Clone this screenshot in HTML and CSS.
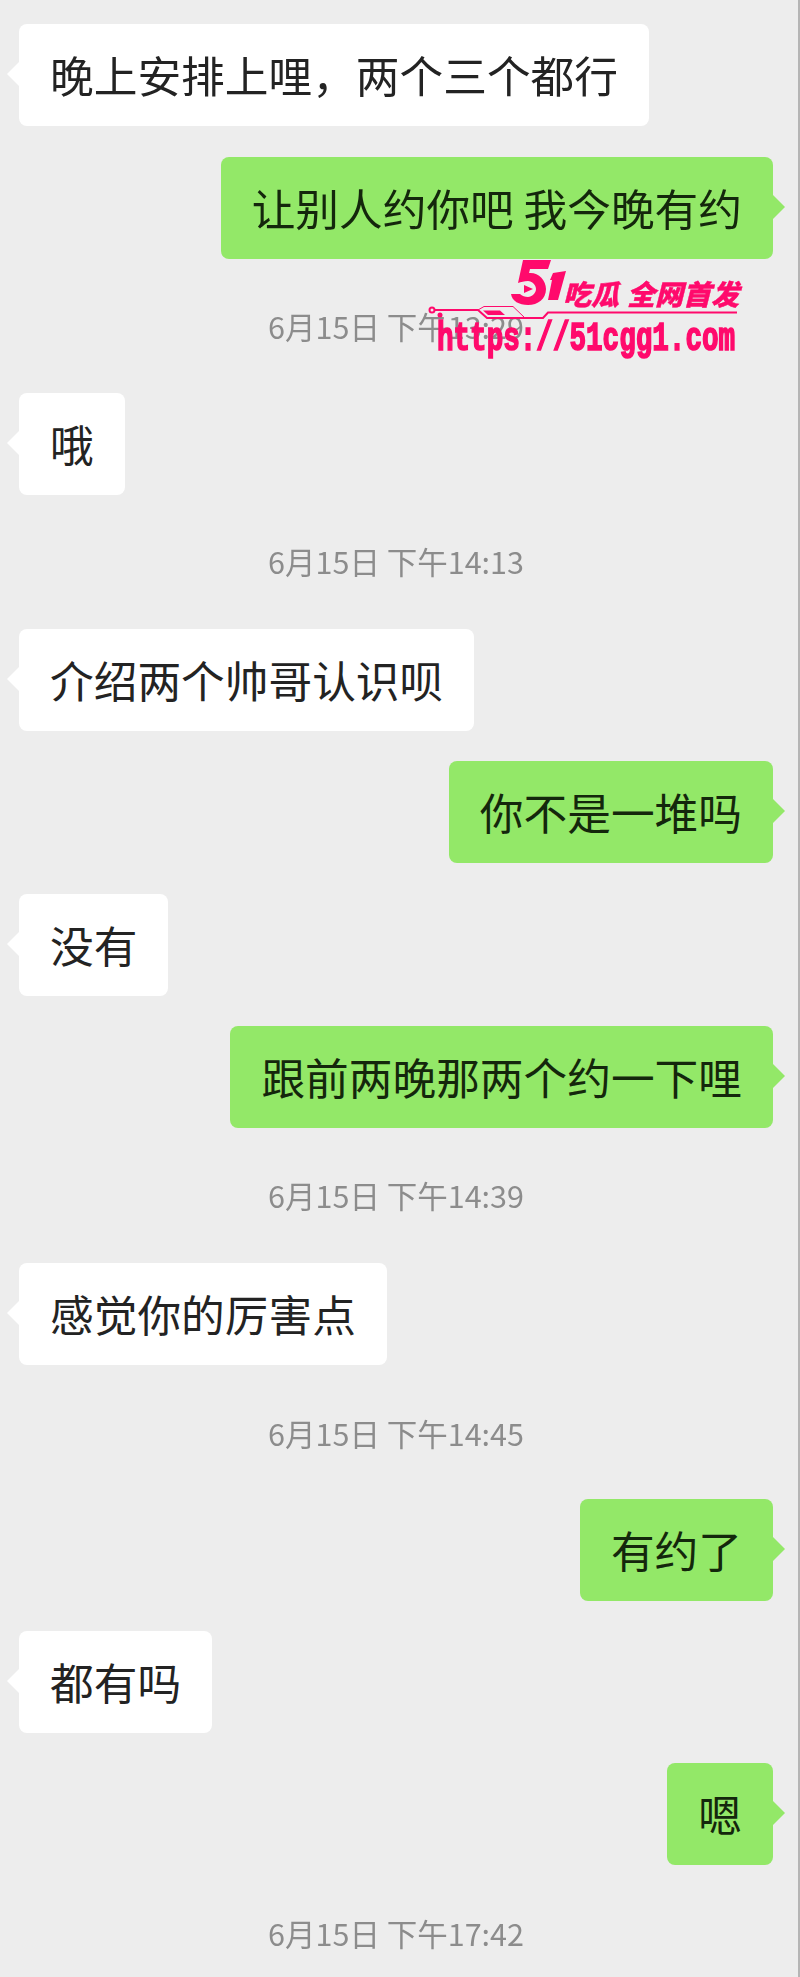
FILE: index.html
```html
<!DOCTYPE html>
<html lang="zh-CN">
<head>
<meta charset="utf-8">
<title>聊天记录</title>
<link rel="stylesheet" href="styles.css">
</head>
<body>
<main class="chat">
  <div class="row left"><div class="bubble">晚上安排上哩，两个三个都行</div></div>
  <div class="row right g31"><div class="bubble">让别人约你吧 我今晚有约</div></div>
  <div class="time t49">6月15日 下午13:29</div>
  <div class="row left g45"><div class="bubble">哦</div></div>
  <div class="time t48">6月15日 下午14:13</div>
  <div class="row left g46"><div class="bubble">介绍两个帅哥认识呗</div></div>
  <div class="row right g30"><div class="bubble">你不是一堆吗</div></div>
  <div class="row left g31"><div class="bubble">没有</div></div>
  <div class="row right g30"><div class="bubble">跟前两晚那两个约一下哩</div></div>
  <div class="time t49">6月15日 下午14:39</div>
  <div class="row left g46"><div class="bubble">感觉你的厉害点</div></div>
  <div class="time t50">6月15日 下午14:45</div>
  <div class="row right g44"><div class="bubble">有约了</div></div>
  <div class="row left g30"><div class="bubble">都有吗</div></div>
  <div class="row right g30"><div class="bubble">嗯</div></div>
  <div class="time t50">6月15日 下午17:42</div>
</main>
<aside class="mark">
  <svg class="mark-art" width="330" height="100" viewBox="0 0 330 100" aria-hidden="true">
    <path class="ink" d="M103 2 H131 L128 11 H110 L109 15 C118 14 126 22 126 31 C126 41 118 47 108 47 C99 47 92 43 91 36 H100 C102 38 105 39 108 39 C112 39 116 35 116 31 C116 27 112 23 108 23 C104 23 101 24 98 25 Z"/>
    <path class="ink" d="M104 27 L113 31 L104 35 Z"/>
    <path class="ink" d="M133 15 L146 13 L138 42 L128 42 L132 22 L130 22 Z"/>
    <circle class="ring" cx="12" cy="52" r="2.5"/>
    <circle class="ink" cx="20" cy="57" r="2.5"/>
    <path class="wire" d="M15 52 H58 L67 60 H123 L128 54.5 H317"/>
    <path class="thin" d="M58 52 L64 48.5 H93 L105 60"/>
    <path class="ink" d="M63 52.5 H80 L85 57 H68 Z"/>
  </svg>
  <div class="mark-title"><span>吃瓜</span><span>全网首发</span></div>
  <div class="mark-url">https://51cgg1.com</div>
</aside>
</body>
</html>
```

FILE: styles.css
```css
* { box-sizing: border-box; }
html, body { margin: 0; padding: 0; }
body {
  width: 800px;
  height: 1977px;
  background: #ededed;
  border-right: 2px solid #b5b5b5;
  position: relative;
  overflow: hidden;
  font-family: "Noto Sans CJK SC", "Noto Sans", sans-serif;
}
.chat {
  display: flex;
  flex-direction: column;
  padding: 24px 0 0 19px;
  width: 773px;
  filter: blur(0.5px);
}
.row { display: flex; }
.row.right { justify-content: flex-end; }
.g30 { margin-top: 30px; }
.g31 { margin-top: 31px; }
.g44 { margin-top: 44px; }
.g45 { margin-top: 45px; }
.g46 { margin-top: 46px; }
.bubble {
  position: relative;
  height: 102px;
  display: flex;
  align-items: center;
  padding: 0 31px;
  border-radius: 8px;
  font-size: 43.7px;
  line-height: 1;
  color: #232323;
  white-space: pre;
}
.bubble::after {
  content: "";
  position: absolute;
  top: 38px;
  width: 0;
  height: 0;
  border-top: 12px solid transparent;
  border-bottom: 12px solid transparent;
}
.left .bubble { background: #fff; }
.left .bubble::after { left: -12px; border-right: 12px solid #fff; }
.right .bubble { background: #93e868; color: #14270c; }
.right .bubble::after { right: -12px; border-left: 12px solid #93e868; }
.time {
  text-align: center;
  font-size: 30.5px;
  line-height: 36px;
  padding-bottom: 4px;
  color: #8c8c8c;
  width: 754px;
}
.t48 { margin-top: 48px; }
.t49 { margin-top: 49px; }
.t50 { margin-top: 50px; }
.mark { position: absolute; left: 420px; top: 258px; width: 330px; height: 100px; color: #ff0a6c; }
.mark-art { position: absolute; left: 0; top: 0; }
.ink { fill: #ff0a6c; }
.ring { fill: #ededed; stroke: #ff0a6c; stroke-width: 2; }
.wire { fill: none; stroke: #ff0a6c; stroke-width: 2; }
.thin { fill: none; stroke: #ff0a6c; stroke-width: 1; }
.mark-title {
  position: absolute;
  left: 143px;
  top: 19px;
  display: flex;
  gap: 8px;
  font-size: 28px;
  line-height: 32px;
  font-weight: 900;
  font-style: italic;
  white-space: nowrap;
  -webkit-text-stroke: 0.4px #ff0a6c;
}
.mark-url {
  position: absolute;
  left: 17px;
  top: 63px;
  font-family: "Liberation Mono", monospace;
  font-size: 27.6px;
  line-height: 38px;
  font-weight: 700;
  white-space: nowrap;
  transform: scaleY(1.45);
  -webkit-text-stroke: 1.2px #ff0a6c;
}
```
